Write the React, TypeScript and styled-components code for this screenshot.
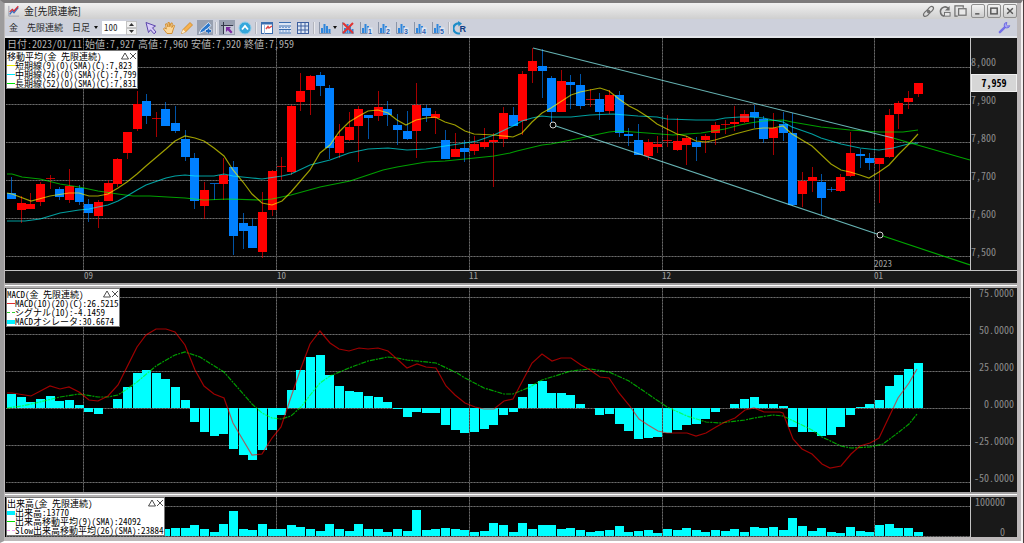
import React from "react";
import styled, { createGlobalStyle } from "styled-components";

const MONO = '"Noto Sans Mono CJK JP", "Noto Sans CJK JP", "Liberation Mono", monospace';
const SANS = '"Noto Sans CJK JP", "Liberation Sans", sans-serif';

const GlobalStyle = createGlobalStyle`
  *, *::before, *::after { box-sizing: border-box; }
  html, body { margin: 0; padding: 0; background: #ffffff; }
  body { font-family: ${SANS}; }
  button, input, select { font: inherit; color: inherit; margin: 0; padding: 0; }
`;

/* ---------- window frame ---------- */

const Desktop = styled.div`
  background: #4a3c3e;
  padding-right: 1px;
`;

const WindowFrame = styled.main`
  display: flex;
  flex-direction: column;
  background: #bdb9ba;
  border-top: 3px solid #7c7a7b;
  border-left: 4px solid #9d9c9d;
  border-right: 2px solid #f4f0f0;
  border-bottom: 2px solid #ffffff;
  padding: 0 4px 4px 1px;
`;

const TitleBar = styled.header`
  display: flex;
  align-items: center;
  height: 16px;
  padding: 0 0 0 3px;
  background: linear-gradient(#f0f0f0, #cfcfcf);
`;

const Title = styled.h1`
  margin: 0 auto 0 4px;
  font-size: 10px;
  line-height: 16px;
  font-weight: 400;
  color: #1c1c1c;
`;

const TitleTools = styled.div`
  display: flex;
  gap: 2px;
  margin-right: 4px;
`;

const PlainButton = styled.button`
  display: flex;
  align-items: center;
  justify-content: center;
  width: 14px;
  height: 14px;
  border: 0;
  background: none;
`;

const WindowButtons = styled.div`
  display: flex;
  gap: 2px;
`;

const WindowButton = styled.button`
  display: flex;
  align-items: center;
  justify-content: center;
  width: 14px;
  height: 14px;
  border: 1px solid #8f8f8f;
  border-radius: 2px;
  background: linear-gradient(#f2f2f2, #cdcdcd);
`;

/* ---------- toolbar ---------- */

const Toolbar = styled.div`
  display: flex;
  align-items: center;
  height: 19px;
  padding: 0 5px 0 4px;
  border-bottom: 2px solid #e4e6ea;
  background: #cdd0db;
  font-size: 9px;
  line-height: 14px;
  color: #2a2a2a;
`;

const SymbolName = styled.span`
  margin-right: 9px;
`;

const PeriodSelect = styled.select`
  appearance: none;
  width: 18px;
  height: 14px;
  border: 0;
  background: none;
  line-height: 14px;
`;

const Caret = styled.span`
  width: 0;
  height: 0;
  margin: 0 4px;
  border: 2px solid transparent;
  border-top: 3px solid #111;
  border-bottom: 0;
`;

const CountInput = styled.input`
  width: 24px;
  height: 13px;
  padding-left: 2px;
  border: 0;
  background: #ffffff;
  font-family: ${MONO};
  font-size: 9px;
  line-height: 13px;
`;

const Spinner = styled.div`
  display: flex;
  flex-direction: column;
  width: 11px;
  margin-right: 6px;
`;

const SpinButton = styled.button`
  display: flex;
  align-items: center;
  justify-content: center;
  height: 7px;
  border: 1px solid #c4c4c4;
  background: #f1f1f1;
`;

const ToolGroup = styled.div`
  display: flex;
  align-items: center;
  gap: 2px;
`;

const ToolButton = styled.button<{ $active?: boolean }>`
  display: flex;
  align-items: center;
  justify-content: center;
  width: 16px;
  height: 15px;
  border: 0;
  background: ${(p) => (p.$active ? "#98a0b0" : "none")};
`;

const ToolCaret = styled(Caret)`
  margin: 0 1px 0 -2px;
`;

const ToolDivider = styled.span`
  width: 2px;
  height: 12px;
  margin: 0 2px;
  border-left: 1px solid #b3b5bd;
  border-right: 1px solid #e9eaee;
`;

const SettingsSlot = styled.div`
  margin-left: auto;
`;

/* ---------- chart panes ---------- */

const Pane = styled.section`
  display: grid;
  grid-template-columns: minmax(0, 1fr) 47px;
`;

const Splitter = styled.div`
  height: 5px;
  border-top: 2px solid #a2a0a1;
  border-bottom: 2px solid #b5b3b4;
  background: #ffffff;
`;

const Plot = styled.div<{ $height: number }>`
  position: relative;
  height: ${(p) => p.$height}px;
  padding-left: 1px;
  background: #000000;
`;

const PlotSvg = styled.svg`
  display: block;
  width: 100%;
  height: 100%;
`;

const Axis = styled.div<{ $top: number; $step: number; $right?: number }>`
  position: relative;
  display: grid;
  grid-auto-rows: 10px;
  row-gap: ${(p) => p.$step - 10}px;
  align-content: start;
  justify-items: ${(p) => (p.$right ? "end" : "start")};
  padding-top: ${(p) => p.$top}px;
  padding-right: ${(p) => p.$right ?? 0}px;
  border-left: 1px solid #c4c4c4;
  background: #191919;
  font-family: ${MONO};
  font-size: 10px;
  line-height: 10px;
  color: #8c8c8c;
`;

const PriceTag = styled.output`
  position: absolute;
  top: 36px;
  left: 0;
  right: 0;
  height: 18px;
  border: 1px solid #f0f0f0;
  background: #d6d6d6;
  color: #000000;
  font-weight: 700;
  line-height: 15px;
  text-align: center;
`;

const TimeStrip = styled.div`
  display: grid;
  grid-template-columns: 79fr 193fr 192fr 193fr 212fr 143fr;
  height: 13px;
  border-top: 1px solid #c4c4c4;
  background: #191919;
  font-family: ${MONO};
  font-size: 9px;
  line-height: 10px;
  color: #a0a0a0;
`;

const YearStrip = styled.div`
  position: absolute;
  left: 0;
  right: 0;
  bottom: 1px;
  display: grid;
  grid-template-columns: 869fr 96fr;
  font-family: ${MONO};
  font-size: 9px;
  line-height: 10px;
  color: #a0a0a0;
`;

const Quote = styled.dl`
  position: absolute;
  top: 0;
  left: 2px;
  display: flex;
  gap: 3px;
  margin: 0;
  font-family: ${MONO};
  font-size: 10px;
  line-height: 11px;
  color: #b4b4b4;
  white-space: nowrap;
`;

const QuoteItem = styled.div`
  display: flex;
  dd, dt { margin: 0; }
`;

const LegendBox = styled.div<{ $top: number }>`
  position: absolute;
  top: ${(p) => p.$top}px;
  left: 1px;
  border: 1px solid #777777;
  background: #ffffff;
  font-family: ${MONO};
  font-size: 9px;
  line-height: 9px;
  color: #000000;
  white-space: nowrap;
`;

const LegendHead = styled.div`
  display: flex;
  align-items: center;
  height: 10px;
`;

const LegendTitle = styled.span`
  margin-right: auto;
`;

const LegendButton = styled.button`
  display: flex;
  width: 8px;
  height: 8px;
  border: 0;
  background: none;
`;

const LegendRow = styled.div`
  display: flex;
  align-items: center;
  height: 9px;
`;

const Swatch = styled.span<{ $color: string; $kind?: "solid" | "dashed" | "block" }>`
  flex: none;
  width: 8px;
  border-top: ${(p) => (p.$kind === "block" ? 4 : 1)}px
    ${(p) => (p.$kind === "dashed" ? "dashed" : "solid")} ${(p) => p.$color};
`;

/* ---------- data ---------- */

const STEP = 9.643;
const cx = (i: number) => Math.round(11.2 + STEP * i) + 0.5;

type Candle = [high: number, top: number, bottom: number, low: number, up: 0 | 1];

const candles: Candle[] = [
  [177,193,199,199,0],[196,203,210,223,1],[193,204,209,209,1],[182,184,202,206,1],[175,178,179,189,1],
  [187,189,197,200,0],[169,186,200,203,1],[185,188,202,205,0],[199,204,213,222,0],[200,202,216,228,1],
  [180,183,201,201,1],[158,159,184,187,1],[132,132,153,159,1],[91,104,129,131,1],[94,101,116,124,0],
  [112,118,119,137,1],[102,109,126,126,0],[106,123,131,133,0],[130,139,157,161,0],[153,158,201,209,0],
  [182,190,206,219,1],[184,183,184,200,0],[158,175,184,200,1],[161,167,236,255,0],[213,223,231,249,0],
  [219,226,248,248,0],[192,212,252,258,1],[170,171,210,216,1],[157,166,167,180,1],[105,106,172,175,1],
  [73,91,102,111,1],[75,76,90,115,1],[72,75,86,96,0],[85,88,148,159,0],[124,136,153,158,1],
  [112,127,140,141,1],[106,109,126,162,1],[115,115,118,139,0],[91,107,116,121,1],[101,109,115,126,0],
  [114,125,130,145,0],[111,131,139,140,0],[83,105,131,158,1],[105,108,116,122,0],[111,114,118,134,1],
  [130,140,159,159,0],[133,149,157,157,1],[140,148,152,162,0],[136,144,151,155,1],[128,142,147,149,1],
  [133,140,142,187,1],[107,113,139,147,1],[107,115,126,126,0],[71,74,121,135,1],[48,61,71,83,1],
  [49,66,71,98,0],[76,78,112,122,0],[70,81,112,112,1],[75,82,85,109,0],[74,85,106,109,0],
  [89,99,100,107,1],[93,99,112,120,0],[90,95,111,114,1],[91,95,133,137,0],[128,134,136,146,0],
  [124,140,155,155,0],[139,142,156,160,1],[136,144,147,153,1],[115,140,141,147,1],[118,141,150,151,1],
  [136,138,145,165,1],[137,142,147,161,0],[134,136,140,153,1],[122,125,133,145,1],[120,124,125,134,1],
  [106,122,124,131,1],[110,114,122,123,1],[105,112,117,128,0],[116,119,139,143,0],[113,128,138,155,1],
  [112,124,133,141,0],[113,133,205,206,0],[172,181,194,207,1],[167,177,181,192,1],[174,182,198,215,0],
  [187,189,190,192,0],[174,177,191,192,1],[132,153,176,177,1],[149,154,156,168,0],[153,158,163,170,0],
  [158,158,164,203,1],[109,115,157,158,1],[101,103,114,129,1],[91,98,102,109,1],[83,83,94,97,1],
];

const shortMa =
  "7,193 12,194 31,201 50,196 69,193 79,193 89,196 98,196 108,194 118,188 127,182 137,174 146,166 166,149 175,141 185,136 195,138 204,141 214,148 224,156 233,170 243,182 252,194 262,203 272,205 282,201 291,192 310,170 320,153 330,145 339,132 349,122 359,116 368,111 378,110 388,113 397,120 406,125 416,120 426,118 435,117 445,122 455,125 465,131 474,134 494,135 513,137 522,133 532,122 542,113 551,108 571,95 580,92 590,90 600,88 609,91 619,99 629,106 637,110 648,117 657,124 677,134 686,136 696,141 706,142 715,140 725,137 735,134 754,129 763,128 773,128 783,126 792,134 812,146 831,164 841,170 850,172 860,175 869,178 879,172 889,165 898,155 908,145 918,134";
const midMa =
  "7,221 25,221 40,219 50,216 60,213 79,210 89,209 98,207 108,205 118,201 127,196 137,190 146,185 166,178 175,176 185,175 195,176 214,176 224,174 233,176 252,178 262,179 282,176 291,174 310,165 330,160 349,153 368,149 388,148 407,150 426,149 445,146 465,143 477,141 494,135 513,126 522,121 532,118 542,116 551,117 571,117 590,115 613,114 638,116 657,117 667,119 696,120 715,120 725,118 740,117 750,117 763,118 783,122 792,127 812,134 821,138 841,144 860,148 879,150 893,148 908,144 918,143";
const longMa =
  "7,174 12,174 22,177 40,179 60,184 79,187 98,191 118,194 133,196 150,196 185,198 204,200 228,199 260,200 272,199 291,195 320,187 350,181 368,175 383,170 397,167 426,162 445,161 465,159 494,156 510,153 517,151 542,145 551,144 571,140 590,136 609,132 620,131 647,133 673,135 701,133 725,129 740,125 750,123 763,121 783,120 792,122 821,127 850,130 879,132 903,132 918,130";

const macdLine =
  "7,393 12,393 31,396 50,386 60,389 69,387 79,392 89,400 98,401 108,396 118,385 127,367 137,347 146,335 156,329 166,329 175,332 185,345 195,370 204,386 214,394 224,398 233,423 243,440 252,455 262,454 272,438 281,427 291,397 301,368 310,344 320,331 330,343 339,349 349,351 359,348 368,349 378,348 388,351 397,359 407,368 417,364 426,367 436,368 446,386 455,395 465,403 475,407 484,409 494,409 504,401 513,399 523,380 532,363 542,354 552,361 561,358 571,358 581,365 590,370 600,377 609,378 619,393 629,405 639,419 648,425 658,431 667,433 687,433 696,436 706,433 716,427 725,422 735,418 745,410 754,408 764,412 780,412 783,413 793,439 802,449 812,454 822,464 830,468 841,466 851,454 860,446 870,443 879,438 889,417 898,398 909,383 917,369";
const signalLine =
  "7,408 22,406 40,402 60,397 79,394 98,397 108,397 118,395 127,389 137,382 156,366 175,355 185,352 200,357 224,372 252,404 262,413 272,418 281,419 291,416 301,407 311,394 320,383 330,376 349,368 368,361 388,357 397,358 407,360 436,363 457,373 465,378 484,388 504,394 513,394 530,387 542,380 571,371 590,369 609,372 629,381 648,394 667,407 687,416 706,422 720,423 745,420 754,418 773,415 783,416 802,425 812,430 822,437 841,446 851,448 870,447 883,444 899,432 909,424 917,414";

const oscillator = [
  14,11,6,9,12,7,8,3,-4,-6,0,9,21,35,38,35,29,21,8,-14,-24,-28,-26,-41,-47,-52,-42,-22,-7,18,38,51,53,33,22,17,
  16,12,11,6,-1,-9,-4,-5,-5,-17,-22,-25,-24,-21,-17,-7,-4,11,24,27,15,15,13,4,0,-7,-6,-16,-23,-31,-30,-29,-25,
  -22,-17,-16,-11,-4,0,4,9,11,4,4,2,-19,-24,-24,-28,-27,-19,-7,1,4,8,22,33,39,45,
];

const VOLUME_START = 16;
const volumes = [
  7,8,8,11,7,4,12,25,7,6,12,7,7,11,9,7,5,12,7,5,12,7,7,4,7,5,26,6,7,8,7,6,4,5,13,11,4,13,7,11,11,7,8,6,4,5,6,
  10,4,5,6,3,7,6,8,6,4,6,5,7,4,9,8,9,6,18,10,5,8,4,3,9,5,4,11,12,8,8,4,
];

const monthLines = [83.5, 276.5, 469.5, 662.5, 874.5];

/* ---------- chart parts ---------- */

function GridLines({ rows, top, bottom }: { rows: number[]; top: number; bottom: number }) {
  return (
    <g stroke="#464646" strokeWidth="1">
      {rows.map((y) => (
        <g key={y}>
          <line x1="6" x2="970" y1={y} y2={y} />
          <line x1="6" x2="970" y1={y} y2={y} stroke="#6a6a6a" strokeDasharray="1 2" />
        </g>
      ))}
      {monthLines.map((x) => (
        <g key={x}>
          <line x1={x} x2={x} y1={top} y2={bottom} />
          <line x1={x} x2={x} y1={top} y2={bottom} stroke="#6a6a6a" strokeDasharray="1 2" />
        </g>
      ))}
    </g>
  );
}

function Line({ points, color, dash, opacity = 0.62 }: { points: string; color: string; dash?: string; opacity?: number }) {
  return (
    <polyline points={points} fill="none" stroke={color} strokeOpacity={opacity} strokeWidth="1.2" strokeDasharray={dash} />
  );
}

function Bar({ index, y, height }: { index: number; y: number; height: number }) {
  return (
    <rect
      x={cx(index) - 4.5}
      y={y}
      width="9"
      height={height}
      fill="#00ffff"
    />
  );
}

type LegendEntry = { label: string; color: string; kind?: "solid" | "dashed" | "block" };

function Legend({ title, entries, top }: { title: string; entries: LegendEntry[]; top: number }) {
  return (
    <LegendBox $top={top}>
      <LegendHead>
        <LegendTitle>{title}</LegendTitle>
        <LegendButton aria-label="折りたたむ">
          <svg width="8" height="8" viewBox="0 0 8 8"><path d="M4 1 7.500 7H.5Z" fill="none" stroke="#222" strokeWidth=".8" /></svg>
        </LegendButton>
        <LegendButton aria-label="閉じる">
          <svg width="8" height="8" viewBox="0 0 8 8"><path d="M1 1 7 7M7 1 1 7" stroke="#222" strokeWidth=".8" /></svg>
        </LegendButton>
      </LegendHead>
      {entries.map((e) => (
        <LegendRow key={e.label}>
          <Swatch $color={e.color} $kind={e.kind} />
          {e.label}
        </LegendRow>
      ))}
    </LegendBox>
  );
}

/* ---------- icons ---------- */

const Icon = ({ children, size = 14 }: { children: React.ReactNode; size?: number }) => (
  <svg width={size} height={size} viewBox="0 0 14 14" aria-hidden="true">{children}</svg>
);

const AppIcon = () => (
  <Icon size={12}>
    <path d="M1 1V13H13" stroke="#9a9aa8" fill="none" />
    <path d="M2 11 5 7 7 9 12 3" stroke="#3b6fc0" strokeWidth="1.500" fill="none" />
    <path d="M2 8 5 5 7 7 12 1.500" stroke="#d02c38" strokeWidth="1.500" fill="none" />
  </Icon>
);

const BarsIcon = ({ badge, crossed }: { badge?: string; crossed?: boolean }) => (
  <Icon>
    <path d="M1.500 1V12.500H13" stroke="#8b95a8" fill="none" />
    <path d="M3 7H5V12H3ZM5.500 3H7.500V12H5.500ZM8 5H10V12H8ZM10.500 8H12.500V12H10.500Z" fill="#2f86dc" />
    {crossed && <path d="M2 2 12 12M12 2 2 12" stroke="#e03434" strokeWidth="2" />}
    {badge && (
      <>
        <rect x="8.500" y="6.500" width="5" height="7" fill="#dfe6f2" />
        <text x="9" y="12.500" fontFamily="Liberation Sans, sans-serif" fontSize="7" fontWeight="700" fill="#2c5fae">{badge}</text>
      </>
    )}
  </Icon>
);

const CursorIcon = () => (
  <Icon><path d="M2 1.500 11.500 5 8.500 6.800 12 11 10 12.800 6.500 8.800 4.500 11.500Z" fill="#d8ccf8" stroke="#5c46ac" /></Icon>
);
const HandIcon = () => (
  <Icon>
    <path d="M5 12.500 1.500 8 2.500 6.800 4.300 8 3.500 3 4.700 2.600 6 6V1.500H7.300L7.800 5.800 9 2H10.300L9.800 6.500 11.500 4 12.600 4.600 11 9 10 12.500Z" fill="#fbd79a" stroke="#d08a2a" strokeWidth=".9" />
  </Icon>
);
const PencilIcon = () => (
  <Icon>
    <path d="M1.500 12.500 3 8.500 10 1.500 12.500 4 5.500 11Z" fill="#f7b14e" stroke="#c98324" strokeWidth=".8" />
    <path d="M1.500 12.500 3 8.500 5.500 11Z" fill="#fff0d0" />
  </Icon>
);
const DrawIcon = () => (
  <Icon>
    <path d="M1 12.500 3 8.500 10.500 1.500 13 4.500 6 10.500Z" fill="#2c78cc" stroke="#e8eef8" strokeWidth=".9" />
    <path d="M10.500 7V12.500M7.500 9.800H13.500" stroke="#dce8f8" strokeWidth="3" />
    <path d="M10.500 7.500V12.500M8 10H13" stroke="#1c68c0" strokeWidth="1.800" />
  </Icon>
);
const AxisCursorIcon = () => (
  <Icon>
    <rect x="4" y="5" width="10" height="8" fill="#c4c8d6" />
    <path d="M3.500 1V13M1 4.500H13" stroke="#33384a" />
    <path d="M6 6H11L9.500 7.500 12.500 11 11 12.500 7.700 9.200 6 11Z" fill="#7c2ca0" />
  </Icon>
);
const CircleUpIcon = () => (
  <Icon>
    <circle cx="7" cy="7" r="6" fill="#35a7dc" stroke="#8ccbe8" />
    <path d="M4 8.500 7 5 10 8.500" stroke="#fff" strokeWidth="1.800" fill="none" />
  </Icon>
);
const ChartSheetIcon = () => (
  <Icon>
    <rect x="1.500" y="1.500" width="11" height="11" fill="#fff" stroke="#3c6eae" />
    <path d="M1 2.500H13" stroke="#3c6eae" strokeWidth="2" />
    <path d="M4.500 3V13" stroke="#9ab6da" />
    <path d="M6 8 8 5.500 9 7 12 5" stroke="#e04848" strokeWidth="1.500" fill="none" />
  </Icon>
);
const ListIcon = () => (
  <Icon>
    <rect x="1" y="1" width="12" height="12" fill="#dce6f4" />
    <path d="M1 1.500H13M1 5H13M1 8.500H13M1 12H13" stroke="#3c6eae" />
    <path d="M1 6.500H13M1 10H13" stroke="#7aa0d4" strokeDasharray="2 1" />
  </Icon>
);
const GridIcon = () => (
  <Icon>
    <rect x="1.500" y="1.500" width="11" height="11" fill="#dce6f4" stroke="#3c5e9e" />
    <path d="M1 5H13M1 9H13M5 1V13M9 1V13" stroke="#3c5e9e" />
  </Icon>
);
const ResetIcon = () => (
  <Icon>
    <path d="M7 12.200A5 5 0 1 1 6 2.500" stroke="#1c8cc8" strokeWidth="2.200" fill="none" />
    <path d="M5 0 9 2.500 5.500 5.500Z" fill="#1c8cc8" />
    <text x="6.500" y="11" fontFamily="Liberation Sans, sans-serif" fontSize="9" fontWeight="700" fill="#123c84">R</text>
  </Icon>
);
const WrenchIcon = () => (
  <Icon size={13}>
    <path d="M2 12 7.500 6.500" stroke="#7470e8" strokeWidth="2.600" strokeLinecap="round" />
    <path d="M9.500 1.500A3 3 0 1 0 12.600 5L10.500 5.500 9 4Z" fill="#a9a6f8" stroke="#6864e0" />
  </Icon>
);
const LinkIcon = () => (
  <Icon size={13}>
    <ellipse cx="5" cy="9" rx="4" ry="2.300" transform="rotate(-45 5 9)" fill="none" stroke="#6e6e6e" strokeWidth="1.300" />
    <ellipse cx="9" cy="5" rx="4" ry="2.300" transform="rotate(-45 9 5)" fill="none" stroke="#6e6e6e" strokeWidth="1.300" />
    <path d="M5.500 5 8.500 9" stroke="#6e6e6e" />
  </Icon>
);
const ReloadIcon = () => (
  <Icon size={13}>
    <path d="M11 3.500A5 5 0 1 0 6.500 12" stroke="#6e6e6e" strokeWidth="1.800" fill="none" />
    <path d="M12.500 1V6H7.500Z" fill="#6e6e6e" />
    <rect x="7" y="8" width="6" height="4" fill="#e6e6e6" stroke="#6e6e6e" />
  </Icon>
);
const CopyWindowIcon = () => (
  <Icon size={13}>
    <path d="M4 12H1V1H10V3" fill="none" stroke="#6e6e6e" strokeWidth="1.300" />
    <rect x="5" y="4" width="8" height="7" fill="#e8e8e8" stroke="#6e6e6e" strokeWidth="1.300" />
  </Icon>
);

/* ---------- panes ---------- */

const quotes = [
  ["日付", "2023/01/11"],
  ["始値", "7,927"],
  ["高値", "7,960"],
  ["安値", "7,920"],
  ["終値", "7,959"],
];

function PricePane() {
  return (
    <>
      <Pane>
        <Plot $height={232}>
          <PlotSvg viewBox="6 38 964 232" preserveAspectRatio="none" role="img" aria-label="価格チャート">
            <GridLines rows={[67.5, 104.5, 142.5, 180.5, 218.5, 256.5]} top={38} bottom={270} />
            {candles.map(([high, top, bottom, low, up], i) => (
              <g key={i} fill={up ? "#ff0000" : "#0080ff"}>
                <rect x={cx(i) - 0.5} y={high} width="1" height={low - high} opacity="0.65" />
                <rect x={cx(i) - 4.5} y={top} width="9" height={bottom - top} opacity={bottom - top > 1 ? 1 : 0.75} />
              </g>
            ))}
            <Line points={longMa} color="#00ff00" />
            <Line points={midMa} color="#00ffff" />
            <Line points={shortMa} color="#ffff00" />
            <Line points="533,48 893,138" color="#7fe0e0" opacity={0.8} />
            <Line points="893,138 970,160" color="#00d000" opacity={0.8} />
            <Line points="553,125 880,235" color="#7fe0e0" opacity={0.8} />
            <Line points="880,235 970,265" color="#00d000" opacity={0.8} />
            <circle cx="553" cy="125" r="3" fill="#000" stroke="#d0d0d0" />
            <circle cx="880" cy="235" r="3" fill="#000" stroke="#d0d0d0" />
          </PlotSvg>
          <Quote>
            {quotes.map(([name, value]) => (
              <QuoteItem key={name}>
                <dt>{name}:</dt>
                <dd>{value}</dd>
              </QuoteItem>
            ))}
          </Quote>
          <Legend
            title="移動平均(金 先限連続)"
            top={12}
            entries={[
              { label: "短期線(9)(0)(SMA)(C):7,823", color: "#f0f000" },
              { label: "中期線(26)(0)(SMA)(C):7,799", color: "#00e8f8" },
              { label: "長期線(52)(0)(SMA)(C):7,831", color: "#00e000" },
            ]}
          />
          <YearStrip>
            <span />
            <span>2023</span>
          </YearStrip>
        </Plot>
        <Axis $top={19} $step={38}>
          {["8,000", "7,900", "7,800", "7,700", "7,600", "7,500"].map((v) => (
            <span key={v}>{v}</span>
          ))}
          <PriceTag>7,959</PriceTag>
        </Axis>
      </Pane>
      <TimeStrip>
        <span />
        {["09", "10", "11", "12", "01"].map((m) => (
          <span key={m}>{m}</span>
        ))}
      </TimeStrip>
    </>
  );
}

function MacdPane() {
  return (
    <Pane>
      <Plot $height={204}>
        <PlotSvg viewBox="6 288 964 204" preserveAspectRatio="none" role="img" aria-label="MACDチャート">
          <GridLines rows={[297.5, 334.5, 371.5, 408.5, 445.5, 482.5]} top={288} bottom={492} />
          {oscillator.map((v, i) => (
            <Bar key={i} index={i} y={v > 0 ? 408 - v : 408} height={Math.abs(v)} />
          ))}
          <Line points={signalLine} color="#00ff00" dash="5 1 2 1" />
          <Line points={macdLine} color="#ff0000" />
        </PlotSvg>
        <Legend
          title="MACD(金 先限連続)"
          top={0}
          entries={[
            { label: "MACD(10)(20)(C):26.5215", color: "#e03030" },
            { label: "シグナル(10):-4.1459", color: "#30d030", kind: "dashed" },
            { label: "MACDオシレータ:30.6674", color: "#00f0ff", kind: "block" },
          ]}
        />
      </Plot>
      <Axis $top={0} $step={37} $right={3}>
        {["75.0000", "50.0000", "25.0000", "0.0000", "-25.0000", "-50.0000"].map((v) => (
          <span key={v}>{v}</span>
        ))}
      </Axis>
    </Pane>
  );
}

function VolumePane() {
  return (
    <Pane>
      <Plot $height={40}>
        <PlotSvg viewBox="6 497 964 40" preserveAspectRatio="none" role="img" aria-label="出来高チャート">
          <GridLines rows={[506.5, 536.5]} top={497} bottom={537} />
          {volumes.map((v, i) => (
            <Bar key={i} index={i + VOLUME_START} y={536 - v} height={v} />
          ))}
        </PlotSvg>
        <Legend
          title="出来高(金 先限連続)"
          top={0}
          entries={[
            { label: "出来高:13770", color: "#00f0ff", kind: "block" },
            { label: "出来高移動平均(9)(SMA):24092", color: "#00e000" },
            { label: "Slow出来高移動平均(26)(SMA):23884", color: "#f0a0f0", kind: "dashed" },
          ]}
        />
      </Plot>
      <Axis $top={0} $step={30} $right={12}>
        <span>100000</span>
        <span>0</span>
      </Axis>
    </Pane>
  );
}

export default function App() {
  return (
    <Desktop>
      <GlobalStyle />
      <WindowFrame>
        <TitleBar>
          <AppIcon />
          <Title>金[先限連続]</Title>
          <TitleTools>
            <PlainButton aria-label="リンク"><LinkIcon /></PlainButton>
            <PlainButton aria-label="再読込"><ReloadIcon /></PlainButton>
            <PlainButton aria-label="複製"><CopyWindowIcon /></PlainButton>
          </TitleTools>
          <WindowButtons>
            <WindowButton aria-label="最小化"><Icon size={10}><path d="M3 11H9" stroke="#555" strokeWidth="2" /></Icon></WindowButton>
            <WindowButton aria-label="最大化"><Icon size={10}><rect x="2.500" y="3" width="9" height="8" fill="none" stroke="#555" strokeWidth="2" /></Icon></WindowButton>
            <WindowButton aria-label="閉じる"><Icon size={10}><path d="M3 3 11 11M11 3 3 11" stroke="#555" strokeWidth="2" /></Icon></WindowButton>
          </WindowButtons>
        </TitleBar>

        <Toolbar>
          <SymbolName>金</SymbolName>
          <SymbolName>先限連続</SymbolName>
          <PeriodSelect aria-label="足種" defaultValue="day">
            <option value="day">日足</option>
          </PeriodSelect>
          <Caret />
          <CountInput aria-label="表示本数" type="text" defaultValue="100" />
          <Spinner>
            <SpinButton aria-label="増やす"><svg width="5" height="3"><path d="M2.500 0 5 3H0Z" fill="#333" /></svg></SpinButton>
            <SpinButton aria-label="減らす"><svg width="5" height="3"><path d="M0 0H5L2.500 3Z" fill="#333" /></svg></SpinButton>
          </Spinner>
          <ToolGroup>
            <ToolButton aria-label="選択"><CursorIcon /></ToolButton>
            <ToolButton aria-label="移動"><HandIcon /></ToolButton>
            <ToolButton aria-label="鉛筆"><PencilIcon /></ToolButton>
            <ToolButton aria-label="描画" $active><DrawIcon /></ToolButton>
          </ToolGroup>
          <ToolDivider />
          <ToolGroup>
            <ToolButton aria-label="十字線" $active><AxisCursorIcon /></ToolButton>
            <ToolButton aria-label="上へ"><CircleUpIcon /></ToolButton>
          </ToolGroup>
          <ToolDivider />
          <ToolGroup>
            <ToolButton aria-label="チャート表示"><ChartSheetIcon /></ToolButton>
            <ToolButton aria-label="一覧表示"><ListIcon /></ToolButton>
            <ToolButton aria-label="グリッド"><GridIcon /></ToolButton>
          </ToolGroup>
          <ToolDivider />
          <ToolGroup>
            <ToolButton aria-label="指標"><BarsIcon /></ToolButton>
            <ToolCaret />
            <ToolButton aria-label="指標削除"><BarsIcon crossed /></ToolButton>
            {["1", "2", "3", "4", "5"].map((n) => (
              <ToolButton key={n} aria-label={`指標 ${n}`}><BarsIcon badge={n} /></ToolButton>
            ))}
          </ToolGroup>
          <ToolDivider />
          <ToolButton aria-label="リセット"><ResetIcon /></ToolButton>
          <SettingsSlot>
            <ToolButton aria-label="設定"><WrenchIcon /></ToolButton>
          </SettingsSlot>
        </Toolbar>

        <PricePane />
        <Splitter />
        <MacdPane />
        <Splitter />
        <VolumePane />
      </WindowFrame>
    </Desktop>
  );
}
